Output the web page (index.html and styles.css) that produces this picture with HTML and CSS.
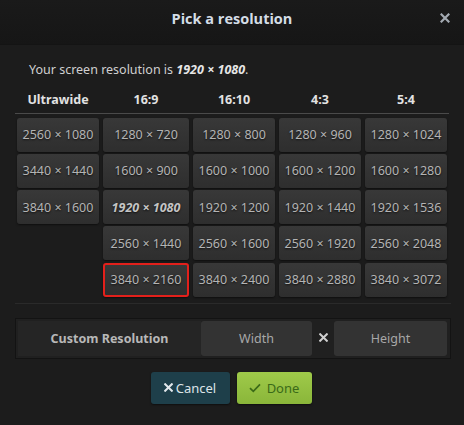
FILE: index.html
```html
<!DOCTYPE html>
<html>
<head>
<meta charset="utf-8">
<link rel="stylesheet" href="styles.css">
</head>
<body>
<div class="dialog">
  <div class="header">
    <div class="spacer"></div>
    <h1 class="title">Pick a resolution</h1>
    <div class="spacer close-wrap"><svg class="close" width="10" height="10" viewBox="0 0 10 10"><path d="M1.5 1.5 L8.5 8.5 M8.5 1.5 L1.5 8.5" stroke="#a3aab2" stroke-width="2.2" stroke-linecap="square"/></svg></div>
  </div>
  <div class="content">
    <p class="current">Your screen resolution is <b><i>1920 × 1080</i></b>.</p>
    <div class="table">
      <div class="th">Ultrawide</div>
      <div class="th">16:9</div>
      <div class="th">16:10</div>
      <div class="th">4:3</div>
      <div class="th">5:4</div>
      <div class="rule"></div>

      <div class="res">2560 × 1080</div>
      <div class="res">1280 × 720</div>
      <div class="res">1280 × 800</div>
      <div class="res">1280 × 960</div>
      <div class="res">1280 × 1024</div>

      <div class="res">3440 × 1440</div>
      <div class="res">1600 × 900</div>
      <div class="res">1600 × 1000</div>
      <div class="res">1600 × 1200</div>
      <div class="res">1600 × 1280</div>

      <div class="res">3840 × 1600</div>
      <div class="res current-res">1920 × 1080</div>
      <div class="res">1920 × 1200</div>
      <div class="res">1920 × 1440</div>
      <div class="res">1920 × 1536</div>

      <div class="empty"></div>
      <div class="res">2560 × 1440</div>
      <div class="res">2560 × 1600</div>
      <div class="res">2560 × 1920</div>
      <div class="res">2560 × 2048</div>

      <div class="empty"></div>
      <div class="res selected">3840 × 2160</div>
      <div class="res">3840 × 2400</div>
      <div class="res">3840 × 2880</div>
      <div class="res">3840 × 3072</div>
    </div>
    <div class="bottom-rule"></div>
    <div class="custom">
      <div class="custom-label">Custom Resolution</div>
      <div class="input">Width</div>
      <div class="times"><svg width="9" height="9" viewBox="0 0 9 9"><path d="M1.2 1.2 L7.8 7.8 M7.8 1.2 L1.2 7.8" stroke="#d0d0d0" stroke-width="2" stroke-linecap="square"/></svg></div>
      <div class="input">Height</div>
    </div>
    <div class="actions">
      <button class="btn cancel"><svg width="9" height="9" viewBox="0 0 9 9"><path d="M1.2 1.2 L7.8 7.8 M7.8 1.2 L1.2 7.8" stroke="#e2e8ec" stroke-width="2" stroke-linecap="square"/></svg>Cancel</button>
      <button class="btn done"><svg width="12" height="10" viewBox="0 0 12 10"><path d="M1 5.2 L4.3 8.4 L11 1.4" fill="none" stroke="#3b6a17" stroke-width="1.7"/></svg>Done</button>
    </div>
  </div>
</div>
</body>
</html>
```
FILE: styles.css
```css
html, body {
  margin: 0;
  padding: 0;
  background: #1c1c1c;
}
body {
  width: 464px;
  height: 425px;
  overflow: hidden;
  font-family: "Noto Sans", "Open Sans", sans-serif;
  color: #c8c8c8;
}
.dialog {
  display: flex;
  flex-direction: column;
}
.header {
  height: 45px;
  background: linear-gradient(#1a1a1a, #161616);
  display: flex;
  align-items: center;
  border-bottom: 1px solid #141414;
  box-sizing: border-box;
}
.spacer {
  width: 60px;
}
.title {
  flex: 1;
  margin: 0;
  text-align: center;
  font-family: "Open Sans", sans-serif;
  font-weight: 700;
  font-size: 14.5px;
  color: #d4dde6;
  position: relative;
  top: -4px;
}
.close-wrap {
  display: flex;
  justify-content: flex-end;
  padding-right: 14px;
  box-sizing: border-box;
  position: relative;
  top: -4px;
}
.close {
  display: block;
}
.content {
  padding: 0 13px 0 15px;
}
.current {
  margin: 16px 0 0 14px;
  font-size: 12.5px;
  color: #d0d0d0;
  line-height: 18px;
}
.current b {
  color: #e6e6e6;
}
.table {
  margin-top: 12px;
  display: grid;
  grid-template-columns: 82px 86px 82px 82px 82px;
  column-gap: 4px;
  row-gap: 2.3px;
  padding: 0 2px;
  width: 436px;
  box-sizing: border-box;
}
.th {
  text-align: center;
  font-weight: 700;
  font-size: 12.5px;
  color: #e2e2e2;
  line-height: 18px;
  padding-bottom: 2px;
}
.rule {
  grid-column: 1 / -1;
  height: 1px;
  background: #4a4a4a;
  margin: 0 -2px 1px;
}
.res {
  height: 34px;
  border-radius: 3px;
  background: linear-gradient(#383838, #2e2e2e);
  box-shadow: 0 1px 2px rgba(0,0,0,0.5);
  display: flex;
  align-items: center;
  justify-content: center;
  font-size: 12.5px;
  color: #b4b4b4;
  text-shadow: 0 1px 2px rgba(0,0,0,0.7);
  box-sizing: border-box;
}
.current-res {
  font-weight: 700;
  font-style: italic;
  color: #c4c4c4;
}
.selected {
  border: 2px solid #e3201b;
}
.bottom-rule {
  height: 1px;
  background: #2a2a2a;
  margin-top: 6px;
  width: 436px;
}
.custom {
  margin-top: 14px;
  width: 436px;
  height: 41px;
  box-sizing: border-box;
  border: 1px solid #131313;
  background: #202020;
  padding: 2px;
  display: flex;
  align-items: stretch;
}
.custom-label {
  width: 183px;
  background: #252525;
  display: flex;
  align-items: center;
  justify-content: center;
  font-weight: 700;
  font-size: 12.5px;
  color: #b8b8b8;
}
.input {
  width: 111px;
  background: #333333;
  border-radius: 3px;
  display: flex;
  align-items: center;
  justify-content: center;
  font-size: 12.5px;
  color: #a8a8a8;
}
.input:last-child {
  width: 113px;
}
.times {
  width: 22px;
  display: flex;
  align-items: center;
  justify-content: center;
  padding-bottom: 2px;
}
.actions {
  display: flex;
  justify-content: center;
  gap: 7px;
  margin-top: 13px;
  padding-right: 4px;
}
.btn {
  height: 32px;
  border: none;
  border-radius: 3px;
  font-family: "Noto Sans", sans-serif;
  font-size: 13px;
  display: flex;
  align-items: center;
  justify-content: center;
  padding: 0;
}
.cancel {
  width: 79px;
  background: #1e3f4a;
  color: #dde4e8;
  box-shadow: 0 1px 2px rgba(0,0,0,0.5);
  gap: 3px;
}
.done {
  width: 75px;
  background: linear-gradient(#9fca4a, #8ab63a);
  color: #3a6a18;
  box-shadow: 0 1px 2px rgba(0,0,0,0.5);
  gap: 6px;
}
```
